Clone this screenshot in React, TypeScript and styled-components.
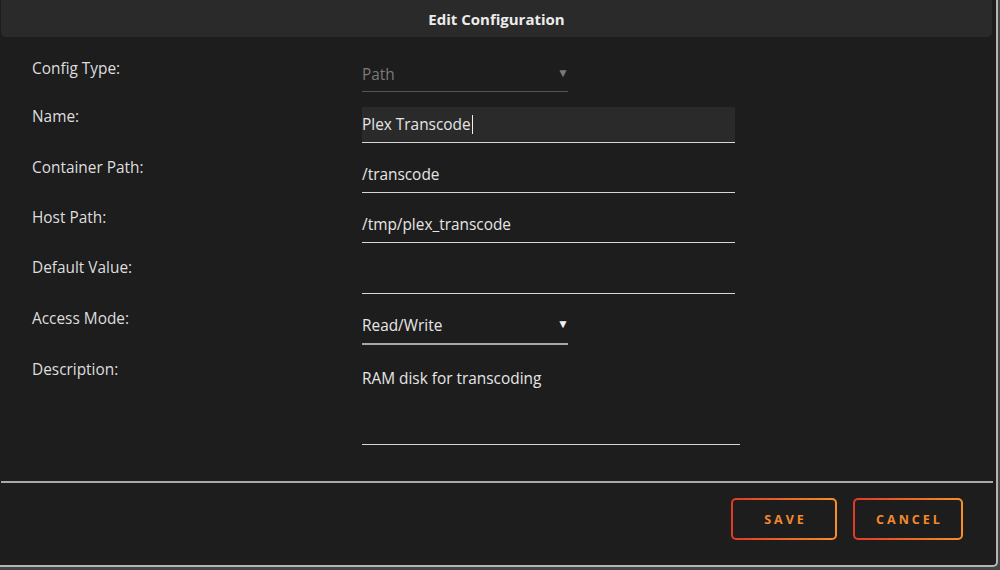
import React from "react";
import styled, { createGlobalStyle } from "styled-components";

const Global = createGlobalStyle`
  html, body { margin: 0; padding: 0; background: #464646; }
  body { font-family: "Open Sans", "Noto Sans", sans-serif; -webkit-font-smoothing: antialiased; }
  * { box-sizing: border-box; }
`;

const Dialog = styled.div`
  width: 998px;
  height: 567px;
  background: #1d1d1d;
  border-right: 2px solid #b4b4b4;
  border-bottom: 2px solid #b4b4b4;
  border-bottom-right-radius: 5px;
  display: flex;
  flex-direction: column;
`;

const Header = styled.div`
  margin: 0 4px 0 1px;
  height: 37px;
  background: #2a2a2a;
  border-radius: 0 0 5px 5px;
  display: flex;
  align-items: center;
  justify-content: center;
  color: #ececec;
  font-weight: 700;
  font-size: 15px;
`;

const Form = styled.div`
  display: grid;
  grid-template-columns: 330px 1fr;
  row-gap: 15px;
  padding: 22px 0 0 32px;
`;

const Label = styled.div`
  color: #dedede;
  font-size: 15.4px;
  line-height: 20px;
`;

const Field = styled.div<{ $w: number; $h?: number; $filled?: boolean; $line?: string; $lw?: number; $muted?: boolean; $top?: boolean }>`
  position: relative;
  width: ${(p) => p.$w}px;
  height: ${(p) => p.$h ?? 35}px;
  background: ${(p) => (p.$filled ? "#2a2a2a" : "transparent")};
  border-bottom: ${(p) => p.$lw ?? 1}px solid ${(p) => p.$line ?? "#d6d6d6"};
  color: ${(p) => (p.$muted ? "#7a7a7a" : "#e6e6e6")};
  font-size: 15.4px;
  display: flex;
  align-items: ${(p) => (p.$top ? "flex-start" : "center")};
  padding-top: ${(p) => (p.$top ? "9px" : "0")};
  line-height: 20px;
`;

const Caret = styled.span`
  display: inline-block;
  width: 1px;
  height: 19px;
  background: #f0f0f0;
  margin-left: 1px;
`;

const Arrow = styled.span<{ $muted?: boolean }>`
  position: absolute;
  right: -1px;
  top: 50%;
  transform: translateY(-58%);
  font-size: 12px;
  color: ${(p) => (p.$muted ? "#7a7a7a" : "#f2f2f2")};
`;

const Divider = styled.div`
  margin: 36px 3px 0 1px;
  height: 2px;
  background: #a9a9a9;
`;

const Actions = styled.div`
  display: flex;
  justify-content: flex-end;
  gap: 16px;
  padding: 15px 33px 0 0;
`;

const Button = styled.button<{ $w: number }>`
  width: ${(p) => p.$w}px;
  height: 42px;
  border: 2px solid transparent;
  border-radius: 5px;
  background: linear-gradient(#1d1d1d, #1d1d1d) padding-box,
    linear-gradient(90deg, #e03a26, #f7902a) border-box;
  color: #f28a2c;
  font-family: "Open Sans", "Noto Sans", sans-serif;
  font-weight: 700;
  font-size: 12.5px;
  letter-spacing: 3px;
  padding: 0 0 0 3px;
  cursor: pointer;
`;

export default function App() {
  return (
    <>
      <Global />
      <Dialog>
        <Header>Edit Configuration</Header>
        <Form>
          <Label>Config Type:</Label>
          <Field $w={206} $h={33} $line="#555" $muted>
            Path
            <Arrow $muted>▼</Arrow>
          </Field>

          <Label>Name:</Label>
          <Field $w={373} $h={36} $filled>
            Plex Transcode
            <Caret />
          </Field>

          <Label>Container Path:</Label>
          <Field $w={373}>/transcode</Field>

          <Label>Host Path:</Label>
          <Field $w={373}>/tmp/plex_transcode</Field>

          <Label>Default Value:</Label>
          <Field $w={373} $h={36} />

          <Label>Access Mode:</Label>
          <Field $w={206} $h={36} $lw={2} $line="#a8a8a8">
            Read/Write
            <Arrow>▼</Arrow>
          </Field>

          <Label>Description:</Label>
          <Field $w={378} $h={85} $top>
            RAM disk for transcoding
          </Field>
        </Form>
        <Divider />
        <Actions>
          <Button $w={106}>SAVE</Button>
          <Button $w={110}>CANCEL</Button>
        </Actions>
      </Dialog>
    </>
  );
}
